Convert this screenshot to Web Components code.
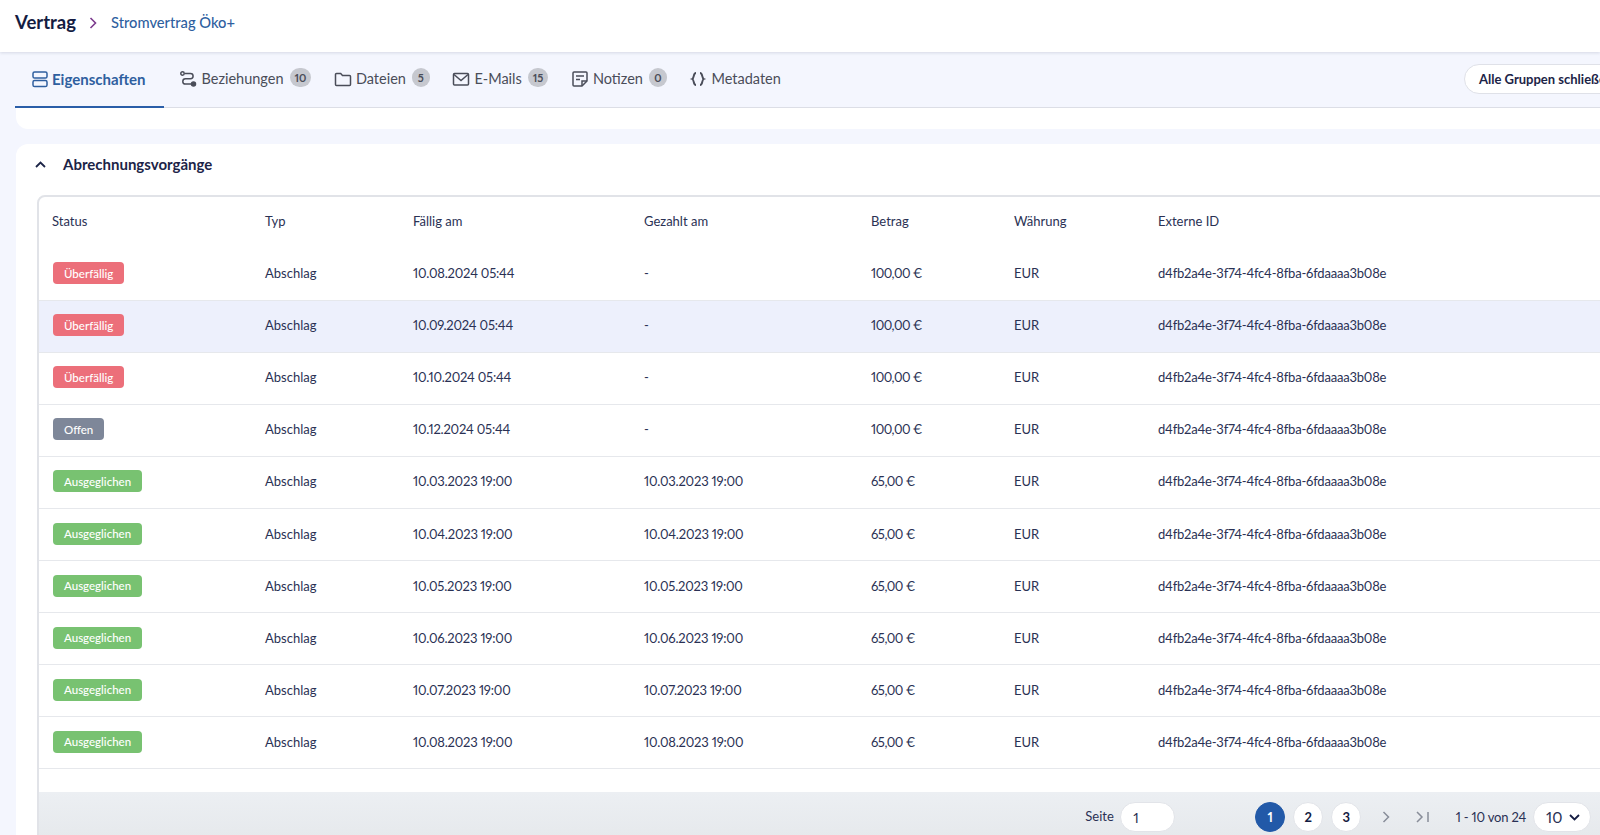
<!DOCTYPE html>
<html lang="de">
<head>
<meta charset="utf-8">
<title>Vertrag</title>
<style>
html, body {
  margin: 0;
  height: 835px;
  overflow: hidden;
  background: #f4f6fe;
  font-family: Lato, "Noto Sans", sans-serif;
  font-variant-numeric: proportional-nums;
  color: #2a3154;
}
</style>
</head>
<body>
<app-header title="Vertrag" current="Stromvertrag Öko+"></app-header>
<tab-bar action="Alle Gruppen schließen">
  <tab-item icon="rows" active>Eigenschaften</tab-item>
  <tab-item icon="route" count="10">Beziehungen</tab-item>
  <tab-item icon="folder" count="5">Dateien</tab-item>
  <tab-item icon="mail" count="15">E-Mails</tab-item>
  <tab-item icon="note" count="0">Notizen</tab-item>
  <tab-item icon="braces">Metadaten</tab-item>
</tab-bar>
<group-card heading="Abrechnungsvorgänge">
  <billing-table></billing-table>
</group-card>

<script>
const icons = {
  rows: `<rect x="1" y="2" width="14" height="6" rx="1.6"/><rect x="1" y="10.500" width="14" height="6" rx="1.6"/>`,
  route: `<circle cx="3.500" cy="3.500" r="1.700"/><path d="M5.500 3.500h6a2.600 2.600 0 0 1 0 5.200h-5a2.700 2.700 0 0 0 0 5.400h6"/><circle cx="14.500" cy="14" r="2" fill="currentColor"/>`,
  folder: `<path d="M1.500 4.500a1 1 0 0 1 1-1h4.200l1.800 2h7a1 1 0 0 1 1 1v8a1 1 0 0 1-1 1h-13a1 1 0 0 1-1-1z"/>`,
  mail: `<rect x="1.500" y="3.500" width="15" height="11.500" rx="1"/><path d="M2 4.500l7 6 7-6"/>`,
  note: `<path d="M11 16H3a1 1 0 0 1-1-1V3a1 1 0 0 1 1-1h12a1 1 0 0 1 1 1v8z"/><path d="M11 16v-5h5M5 6h8M5 9.500h4"/>`,
  braces: `<path stroke-width="1.900" d="M7 3c-3 0-1.500 5-3.800 6C5.500 10 4 15 7 15M11 3c3 0 1.500 5 3.800 6-2.300 1-.8 6-3.800 6"/>`
};

class AppHeader extends HTMLElement {
  connectedCallback() {
    const shadow = this.attachShadow({ mode: "open" });
    shadow.innerHTML = `<style>
:host {
  display: flex;
  align-items: center;
  height: 52px;
  padding: 0 0 8px 15px;
  box-sizing: border-box;
  background: #fff;
  box-shadow: 0 1px 3px rgb(30 40 80 / .14);
  position: relative;
}
h1 { margin: 0; font-size: 18.500px; font-weight: 700; color: #141c42; }
svg { width: 8px; height: 12px; margin: 1px 14px 0 13px; fill: none; stroke: #7c3b8e; stroke-width: 1.600; }
a { font-size: 14.700px; font-weight: 500; color: #2f5f9f; text-decoration: none; }
</style>
<h1>${this.getAttribute("title")}</h1>
<svg viewBox="0 0 8 12"><path d="M1.500 1l5 5-5 5"/></svg>
<a href="#">${this.getAttribute("current")}</a>`;
  }
}

class TabBar extends HTMLElement {
  connectedCallback() {
    const shadow = this.attachShadow({ mode: "open" });
    shadow.innerHTML = `<style>
:host {
  display: block;
  width: 1624px;
  margin-left: 15px;
  margin-top: 1px;
}
.bar {
  display: flex;
  align-items: stretch;
  height: 54px;
  border-bottom: 1px solid #dcdee6;
}
.tabs { display: flex; flex: 1; }
button {
  flex: none;
  align-self: center;
  width: 160px;
  height: 30px;
  margin: 0 15px 2px 0;
  padding: 0 14px;
  text-align: left;
  white-space: nowrap;
  overflow: hidden;
  background: #fff;
  border: 1px solid #dfe1e8;
  border-radius: 15px;
  font: 700 13px Lato, sans-serif;
  color: #1c2447;
}
</style>
<div class="bar">
  <div class="tabs"><slot></slot></div>
  <button>${this.getAttribute("action")}</button>
</div>`;
  }
}

class TabItem extends HTMLElement {
  connectedCallback() {
    const count = this.getAttribute("count");
    const shadow = this.attachShadow({ mode: "open" });
    shadow.innerHTML = `<style>
:host {
  display: flex;
  align-items: center;
  gap: 4px;
  padding: 0 11.500px 3px 11px;
  color: #4a4d59;
  font-size: 14.500px;
}
:host([active]) {
  color: #2f5f9f;
  font-weight: 700;
  gap: 2px;
  padding: 0 19px 3px 17px;
  margin-right: 4px;
  box-shadow: inset 0 -2px 0 #2a5ea8;
  margin-bottom: -1px;
  font-size: 15px;
}
svg { width: 18px; height: 18px; fill: none; stroke: currentColor; stroke-width: 1.500; }
.count {
  min-width: 18px;
  height: 19px;
  padding: 0 5px;
  box-sizing: border-box;
  margin: -3px 0 0 2px;
  display: flex;
  align-items: center;
  justify-content: center;
  border-radius: 10px;
  background: #c6c8cf;
  font-size: 11px;
  font-weight: 700;
  color: #4a4d59;
}
</style>
<svg viewBox="0 0 18 18">${icons[this.getAttribute("icon")]}</svg>
<slot></slot>
${count !== null ? `<span class="count">${count}</span>` : ""}`;
  }
}

class GroupCard extends HTMLElement {
  connectedCallback() {
    const shadow = this.attachShadow({ mode: "open" });
    shadow.innerHTML = `<style>
:host {
  display: block;
  width: 1624px;
  margin-left: 16px;
}
.strip {
  height: 21px;
  background: #fff;
  border-radius: 0 0 12px 12px;
  margin-bottom: 15px;
}
.card {
  background: #fff;
  border-radius: 12px 12px 0 0;
  padding-left: 21px;
}
header {
  display: flex;
  align-items: center;
  height: 51px;
  padding-bottom: 11px;
  box-sizing: border-box;
  gap: 17px;
  font-size: 15px;
  font-weight: 700;
  color: #1c2447;
}
svg { width: 11px; height: 7px; margin-left: -2px; fill: none; stroke: #1c2447; stroke-width: 1.800; }
</style>
<div class="strip"></div>
<div class="card">
  <header>
    <svg viewBox="0 0 11 7"><path d="M1 6l4.500-4.500L10 6"/></svg>
    ${this.getAttribute("heading")}
  </header>
  <slot></slot>
</div>`;
  }
}

class StatusBadge extends HTMLElement {
  connectedCallback() {
    const colors = { "Überfällig": "#ec6f7a", "Offen": "#7e8799", "Ausgeglichen": "#78c271" };
    const shadow = this.attachShadow({ mode: "open" });
    shadow.innerHTML = `<style>
:host {
  display: inline-flex;
  align-items: center;
  height: 22px;
  margin-left: 1px;
  padding: 0 11px;
  border-radius: 4px;
  background: ${colors[this.textContent.trim()]};
  color: #fff;
  font-size: 11.500px;
  font-weight: 500;
  white-space: nowrap;
}
</style><slot></slot>`;
  }
}

const cols = "213px 148px 231px 227px 143px 144px 1fr";

class BillingRow extends HTMLElement {
  connectedCallback() {
    const cells = ["typ", "due", "paid", "amount", "currency", "ext"];
    const shadow = this.attachShadow({ mode: "open" });
    shadow.innerHTML = `<style>
:host {
  display: grid;
  grid-template-columns: ${cols};
  align-items: center;
  height: 52.100px;
  padding-bottom: 2px;
  box-sizing: border-box;
  border-bottom: 1px solid #e6e8ec;
  font-size: 13px;
  color: #2a3154;
}
:host([selected]) { background: #edf0fc; }
div { padding-left: 13px; white-space: nowrap; }
.due, .paid, .ext { letter-spacing: -.2px; }
.amount { letter-spacing: -.5px; }
</style>
<div><status-badge>${this.getAttribute("status")}</status-badge></div>
${cells.map((c) => `<div class="${c}">${this.getAttribute(c)}</div>`).join("")}`;
  }
}

class TablePager extends HTMLElement {
  connectedCallback() {
    const shadow = this.attachShadow({ mode: "open" });
    shadow.innerHTML = `<style>
:host {
  display: flex;
  align-items: flex-start;
  justify-content: flex-end;
  height: 62px;
  padding: 10px 48px 0 0;
  box-sizing: border-box;
  margin-top: 23px;
  background: linear-gradient(180deg, #eceff3 0, #e6e9ec 45px);
  font-size: 13px;
  color: #2a3154;
}
.seite { margin-top: 6px; width: 35px; }
.input, .page, .select {
  display: flex;
  align-items: center;
  box-sizing: border-box;
  background: #fff;
  border: 1px solid #e2e4e9;
}
.input { width: 55px; height: 30px; border-radius: 15px; padding-left: 12px; font-size: 14px; margin-right: 80px; }
.page {
  width: 30px;
  height: 30px;
  border-radius: 50%;
  justify-content: center;
  font-weight: 700;
  color: #141c42;
  margin-right: 8px;
}
.page.on { background: #2259a8; border-color: #2259a8; color: #fff; }
svg { fill: none; stroke: #888d99; stroke-width: 1.500; }
.next { width: 8px; height: 12px; margin: 9px 26px 0 12.500px; }
.last { width: 13px; height: 12px; margin: 9px 27px 0 0; }
.range { margin: 7px 7px 0 0; white-space: nowrap; letter-spacing: -.2px; }
.select { width: 58px; height: 30px; border-radius: 15px; padding-left: 12px; gap: 7px; font-size: 15.500px; }
.select svg { width: 11px; height: 7px; stroke: #141c42; stroke-width: 1.800; }
</style>
<span class="seite">Seite</span>
<span class="input">1</span>
<span class="page on">1</span>
<span class="page">2</span>
<span class="page">3</span>
<svg class="next" viewBox="0 0 8 12"><path d="M1.500 1l5 5-5 5"/></svg>
<svg class="last" viewBox="0 0 13 12"><path d="M1 1l5 5-5 5M12 1v10"/></svg>
<span class="range">1 - 10 von 24</span>
<span class="select">10<svg viewBox="0 0 11 7"><path d="M1 1l4.500 4.500L10 1"/></svg></span>`;
  }
}

const ext = "d4fb2a4e-3f74-4fc4-8fba-6fdaaaa3b08e";
const rows = [
  ["Überfällig", "10.08.2024 05:44", "-", "100,00 €"],
  ["Überfällig", "10.09.2024 05:44", "-", "100,00 €"],
  ["Überfällig", "10.10.2024 05:44", "-", "100,00 €"],
  ["Offen", "10.12.2024 05:44", "-", "100,00 €"],
  ["Ausgeglichen", "10.03.2023 19:00", "10.03.2023 19:00", "65,00 €"],
  ["Ausgeglichen", "10.04.2023 19:00", "10.04.2023 19:00", "65,00 €"],
  ["Ausgeglichen", "10.05.2023 19:00", "10.05.2023 19:00", "65,00 €"],
  ["Ausgeglichen", "10.06.2023 19:00", "10.06.2023 19:00", "65,00 €"],
  ["Ausgeglichen", "10.07.2023 19:00", "10.07.2023 19:00", "65,00 €"],
  ["Ausgeglichen", "10.08.2023 19:00", "10.08.2023 19:00", "65,00 €"],
];

class BillingTable extends HTMLElement {
  connectedCallback() {
    const heads = ["Status", "Typ", "Fällig am", "Gezahlt am", "Betrag", "Währung", "Externe ID"];
    const shadow = this.attachShadow({ mode: "open" });
    shadow.innerHTML = `<style>
:host {
  display: block;
  border: 1px solid #e1e3e8;
  border-left-width: 2px;
  border-top-width: 2px;
  border-radius: 8px 0 0 0;
  overflow: hidden;
}
.head {
  display: grid;
  grid-template-columns: ${cols};
  align-items: center;
  height: 51.500px;
  padding-bottom: 4px;
  box-sizing: border-box;
  font-size: 13px;
  color: #2a3154;
}
.head span { padding-left: 13px; }
</style>
<div class="head">${heads.map((h) => `<span>${h}</span>`).join("")}</div>
${rows.map((r, i) => `<billing-row status="${r[0]}" typ="Abschlag" due="${r[1]}" paid="${r[2]}" amount="${r[3]}" currency="EUR" ext="${ext}" ${i === 1 ? "selected" : ""}></billing-row>`).join("")}
<table-pager></table-pager>`;
  }
}

customElements.define("app-header", AppHeader);
customElements.define("tab-bar", TabBar);
customElements.define("tab-item", TabItem);
customElements.define("group-card", GroupCard);
customElements.define("status-badge", StatusBadge);
customElements.define("billing-row", BillingRow);
customElements.define("table-pager", TablePager);
customElements.define("billing-table", BillingTable);
</script>
</body>
</html>
